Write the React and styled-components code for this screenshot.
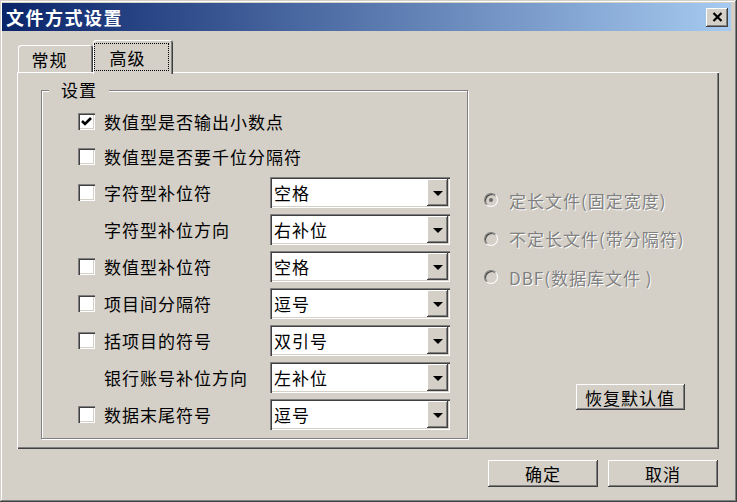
import styled, { createGlobalStyle } from "styled-components"

const GlobalStyle = createGlobalStyle`
  html, body {
    margin: 0;
    padding: 0;
    background: #d4d0c8;
  }
  body {
    font-family: "Noto Sans CJK SC", "Noto Sans", sans-serif;
    color: #000;
  }
  * {
    box-sizing: border-box;
  }
`

const raised = `
  box-shadow: inset -1px -1px 0 #404040, inset 1px 1px 0 #fff,
    inset -2px -2px 0 #808080, inset 2px 2px 0 #d4d0c8;
`

const sunken = `
  box-shadow: inset 1px 1px 0 #808080, inset 2px 2px 0 #404040,
    inset -1px -1px 0 #fff, inset -2px -2px 0 #d4d0c8;
`

const Window = styled.div`
  width: 737px;
  height: 502px;
  background: #d4d0c8;
  padding: 3px 6px 4px 2px;
  display: flex;
  flex-direction: column;
  box-shadow: inset -1px -1px 0 #404040, inset 1px 1px 0 #d4d0c8,
    inset -2px -2px 0 #808080, inset 2px 2px 0 #fff;
`

const TitleBar = styled.div`
  height: 28px;
  flex-shrink: 0;
  display: flex;
  align-items: center;
  justify-content: space-between;
  padding: 0 3px 0 4px;
  background: linear-gradient(to right, #0a246a, #a6caf0);
`

const TitleText = styled.span`
  color: #fff;
  font-weight: bold;
  font-size: 18px;
  letter-spacing: 1.5px;
`

const CloseButton = styled.span`
  width: 22px;
  height: 19px;
  background: #d4d0c8;
  display: flex;
  align-items: center;
  justify-content: center;
  ${raised}
`

const Body = styled.div`
  flex: 1;
  display: flex;
  flex-direction: column;
  padding: 0 12px 0 15px;
`

const TabRow = styled.div`
  height: 41px;
  flex-shrink: 0;
  display: flex;
  align-items: flex-end;
  padding-left: 1px;
  position: relative;
  z-index: 1;
`

const Tab = styled.div`
  width: ${p => (p.$active ? 80 : 75)}px;
  height: ${p => (p.$active ? 34 : 27)}px;
  margin-bottom: ${p => (p.$active ? -2 : 0)}px;
  padding: ${p => (p.$active ? "3px 4px 3px 1px" : "1px 12px 0 0")};
  background: #d4d0c8;
  border-radius: 3px 3px 0 0;
  box-shadow: inset 1px 1px 0 #fff, inset -1px 0 0 #404040, inset -2px 0 0 #808080;
  display: flex;
  align-items: center;
  justify-content: center;
  font-size: 17px;
  letter-spacing: 1px;
`

const FocusRect = styled.span`
  flex: 1;
  align-self: stretch;
  border: 1px dotted #000;
  display: flex;
  align-items: center;
  justify-content: center;
  padding-right: 8px;
`

const Panel = styled.div`
  height: 377px;
  flex-shrink: 0;
  display: flex;
  padding: 18px 0 10px 24px;
  background: #d4d0c8;
  box-shadow: inset 1px 1px 0 #fff, inset -1px -1px 0 #404040, inset -2px -2px 0 #808080;
`

const GroupBox = styled.div`
  position: relative;
  width: 427px;
  height: 349px;
  flex-shrink: 0;
  border: 1px solid #808080;
  box-shadow: inset 1px 1px 0 #fff, 1px 1px 0 #fff;
  padding: 13px 17px 0 36px;
`

const GroupLabel = styled.span`
  position: absolute;
  top: -12px;
  left: 7px;
  padding: 0 12px;
  line-height: 22px;
  background: #d4d0c8;
  font-size: 17px;
  letter-spacing: 1px;
`

const SettingRow = styled.div`
  display: grid;
  grid-template-columns: 26px 166px 180px;
  align-items: center;
  height: ${p => p.$h}px;
`

const CheckBox = styled.span`
  width: 17px;
  height: 17px;
  background: #fff;
  display: flex;
  align-items: center;
  justify-content: center;
  ${sunken}
`

const Label = styled.span`
  font-size: 17px;
  letter-spacing: 1px;
  white-space: nowrap;
`

const Combo = styled.div`
  width: 180px;
  height: 31px;
  background: #fff;
  display: flex;
  padding: 2px;
  ${sunken}
`

const ComboText = styled.span`
  flex: 1;
  display: flex;
  align-items: center;
  padding-left: 2px;
  font-size: 17px;
  letter-spacing: 1px;
`

const ComboButton = styled.span`
  width: 21px;
  background: #d4d0c8;
  display: flex;
  align-items: center;
  justify-content: center;
  ${raised}

  &::after {
    content: "";
    border-left: 5px solid transparent;
    border-right: 5px solid transparent;
    border-top: 5px solid #000;
    margin-top: 1px;
  }
`

const Side = styled.div`
  flex: 1;
  display: flex;
  flex-direction: column;
  padding: 91px 36px 29px 16px;
`

const RadioRow = styled.div`
  height: 38.5px;
  display: flex;
  align-items: center;
`

const Radio = styled.span`
  width: 14px;
  height: 14px;
  border-radius: 50%;
  background: #d4d0c8;
  border: 1px solid;
  border-color: #808080 #fff #fff #808080;
  box-shadow: inset 1px 1px 0 #404040;
  display: flex;
  align-items: center;
  justify-content: center;

  &::after {
    content: "";
    width: 4px;
    height: 4px;
    border-radius: 50%;
    background: ${p => (p.$checked ? "#6a6a6a" : "transparent")};
  }
`

const RadioLabel = styled.span`
  margin-left: 11px;
  font-size: 17px;
  letter-spacing: 1px;
  color: #808080;
  text-shadow: 1px 1px 0 #fff;
  white-space: nowrap;
`

const Button = styled.button`
  width: ${p => p.$w}px;
  height: ${p => p.$h}px;
  padding: 0;
  border: none;
  background: #d4d0c8;
  font-family: inherit;
  font-size: 17px;
  letter-spacing: 1px;
  color: #000;
  flex-shrink: 0;
  ${raised}
`

const ResetButton = styled(Button)`
  margin-top: auto;
  align-self: flex-end;
`

const Footer = styled.div`
  margin-top: 11px;
  display: flex;
  justify-content: flex-end;
  gap: 10px;
  padding-right: 1px;
`

const settings = [
  { label: "数值型是否输出小数点", check: true, checked: true, h: 35 },
  { label: "数值型是否要千位分隔符", check: true, h: 35 },
  { label: "字符型补位符", check: true, value: "空格", h: 37 },
  { label: "字符型补位方向", value: "右补位", h: 37 },
  { label: "数值型补位符", check: true, value: "空格", h: 37 },
  { label: "项目间分隔符", check: true, value: "逗号", h: 37 },
  { label: "括项目的符号", check: true, value: "双引号", h: 37 },
  { label: "银行账号补位方向", value: "左补位", h: 37 },
  { label: "数据末尾符号", check: true, value: "逗号", h: 37 },
]

const fileTypes = [
  { label: "定长文件(固定宽度)", checked: true },
  { label: "不定长文件(带分隔符)" },
  { label: "DBF(数据库文件 )" },
]

const CheckMark = () => (
  <svg width="11" height="9" viewBox="0 0 11 9">
    <polyline points="1,4 4,7 10,1" fill="none" stroke="#000" strokeWidth="2.6" />
  </svg>
)

const CloseIcon = () => (
  <svg width="11" height="10" viewBox="0 0 11 10">
    <path d="M1.5 1 L9.5 9 M9.5 1 L1.5 9" stroke="#000" strokeWidth="2.2" />
  </svg>
)

const App = () => (
  <>
    <GlobalStyle />
    <Window>
      <TitleBar>
        <TitleText>文件方式设置</TitleText>
        <CloseButton>
          <CloseIcon />
        </CloseButton>
      </TitleBar>
      <Body>
        <TabRow>
          <Tab>常规</Tab>
          <Tab $active>
            <FocusRect>高级</FocusRect>
          </Tab>
        </TabRow>
        <Panel>
          <GroupBox>
            <GroupLabel>设置</GroupLabel>
            {settings.map(s => (
              <SettingRow key={s.label} $h={s.h}>
                {s.check ? <CheckBox>{s.checked && <CheckMark />}</CheckBox> : <span />}
                <Label>{s.label}</Label>
                {s.value && (
                  <Combo>
                    <ComboText>{s.value}</ComboText>
                    <ComboButton />
                  </Combo>
                )}
              </SettingRow>
            ))}
          </GroupBox>
          <Side>
            {fileTypes.map(f => (
              <RadioRow key={f.label}>
                <Radio $checked={f.checked} />
                <RadioLabel>{f.label}</RadioLabel>
              </RadioRow>
            ))}
            <ResetButton $w={109} $h={26}>恢复默认值</ResetButton>
          </Side>
        </Panel>
        <Footer>
          <Button $w={110} $h={27}>确定</Button>
          <Button $w={110} $h={27}>取消</Button>
        </Footer>
      </Body>
    </Window>
  </>
)

export default App
